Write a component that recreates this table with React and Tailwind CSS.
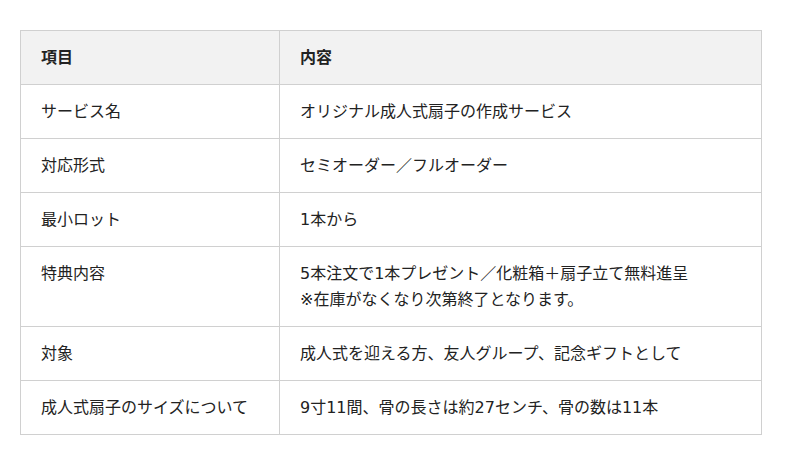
import React from 'react';

const rows = [
  ['サービス名', ['オリジナル成人式扇子の作成サービス']],
  ['対応形式', ['セミオーダー／フルオーダー']],
  ['最小ロット', ['1本から']],
  ['特典内容', ['5本注文で1本プレゼント／化粧箱＋扇子立て無料進呈', '※在庫がなくなり次第終了となります。']],
  ['対象', ['成人式を迎える方、友人グループ、記念ギフトとして']],
  ['成人式扇子のサイズについて', ['9寸11間、骨の長さは約27センチ、骨の数は11本']],
];

const App = () => {
  return (
    <div
      className="bg-white min-h-screen pt-[30px] px-5 text-[#222]"
      style={{ fontFamily: '"DejaVu Sans", "Noto Sans CJK JP", sans-serif' }}
    >
      <table className="w-[742px] border-collapse text-[16px] leading-[26px]">
        <thead>
          <tr className="bg-[#f2f2f2]">
            <th className="w-[259px] border border-[#d0d0d0] px-5 pt-[14px] pb-[13px] text-left font-bold">項目</th>
            <th className="border border-[#d0d0d0] px-5 pt-[14px] pb-[13px] text-left font-bold">内容</th>
          </tr>
        </thead>
        <tbody>
          {rows.map(([label, lines], i) => (
            <tr key={i}>
              <td className="border border-[#d0d0d0] px-5 pt-[14px] pb-[13px] align-top">{label}</td>
              <td className="border border-[#d0d0d0] px-5 pt-[14px] pb-[13px] align-top">
                {lines.map((l, j) => (
                  <div key={j}>{l}</div>
                ))}
              </td>
            </tr>
          ))}
        </tbody>
      </table>
    </div>
  );
};

export default App;
